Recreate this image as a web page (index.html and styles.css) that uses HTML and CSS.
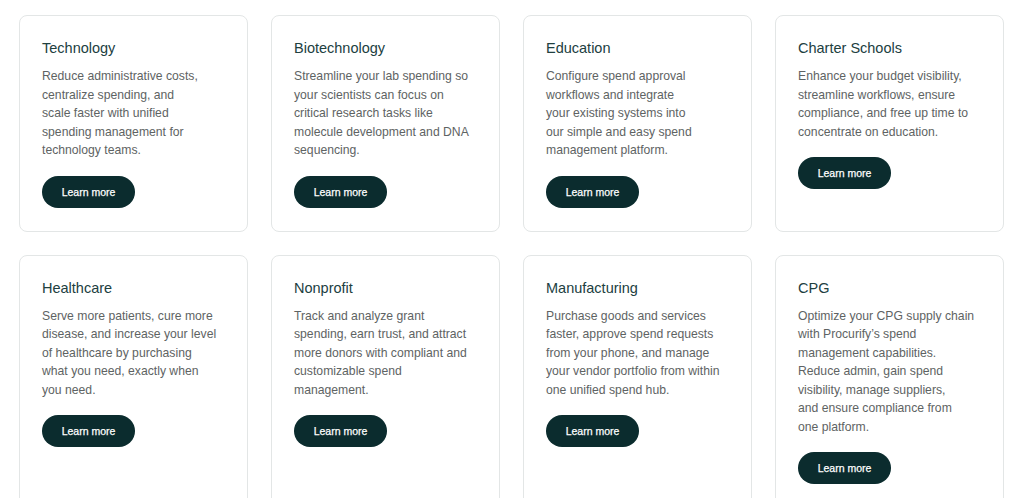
FILE: index.html
```html
<!DOCTYPE html>
<html lang="en">
<head>
<meta charset="utf-8">
<title>Industries</title>
<link rel="stylesheet" href="styles.css">
</head>
<body>
<main class="grid">
  <article class="card">
    <h3 class="card-title">Technology</h3>
    <p class="card-text">Reduce administrative costs,<br>centralize spending, and<br>scale faster with unified<br>spending management for<br>technology teams.</p>
    <a class="btn" href="#">Learn more</a>
  </article>
  <article class="card">
    <h3 class="card-title">Biotechnology</h3>
    <p class="card-text">Streamline your lab spending so<br>your scientists can focus on<br>critical research tasks like<br>molecule development and DNA<br>sequencing.</p>
    <a class="btn" href="#">Learn more</a>
  </article>
  <article class="card">
    <h3 class="card-title">Education</h3>
    <p class="card-text">Configure spend approval<br>workflows and integrate<br>your existing systems into<br>our simple and easy spend<br>management platform.</p>
    <a class="btn" href="#">Learn more</a>
  </article>
  <article class="card">
    <h3 class="card-title">Charter Schools</h3>
    <p class="card-text">Enhance your budget visibility,<br>streamline workflows, ensure<br>compliance, and free up time to<br>concentrate on education.</p>
    <a class="btn" href="#">Learn more</a>
  </article>
  <article class="card">
    <h3 class="card-title">Healthcare</h3>
    <p class="card-text">Serve more patients, cure more<br>disease, and increase your level<br>of healthcare by purchasing<br>what you need, exactly when<br>you need.</p>
    <a class="btn" href="#">Learn more</a>
  </article>
  <article class="card">
    <h3 class="card-title">Nonprofit</h3>
    <p class="card-text">Track and analyze grant<br>spending, earn trust, and attract<br>more donors with compliant and<br>customizable spend<br>management.</p>
    <a class="btn" href="#">Learn more</a>
  </article>
  <article class="card">
    <h3 class="card-title">Manufacturing</h3>
    <p class="card-text">Purchase goods and services<br>faster, approve spend requests<br>from your phone, and manage<br>your vendor portfolio from within<br>one unified spend hub.</p>
    <a class="btn" href="#">Learn more</a>
  </article>
  <article class="card">
    <h3 class="card-title">CPG</h3>
    <p class="card-text">Optimize your CPG supply chain<br>with Procurify’s spend<br>management capabilities.<br>Reduce admin, gain spend<br>visibility, manage suppliers,<br>and ensure compliance from<br>one platform.</p>
    <a class="btn" href="#">Learn more</a>
  </article>
</main>
</body>
</html>
```
FILE: styles.css
```css
* { box-sizing: border-box; }
html, body { margin: 0; padding: 0; background: #ffffff; }
body {
  font-family: "Liberation Sans", Arial, sans-serif;
  overflow: hidden;
}
.grid {
  display: grid;
  grid-template-columns: repeat(4, 229px);
  column-gap: 23px;
  row-gap: 23px;
  padding: 15px 20px 0 19px;
}
.card {
  border: 1px solid #e3e6e6;
  border-radius: 8px;
  padding: 22px 22px 23px 22px;
  display: flex;
  flex-direction: column;
  align-items: flex-start;
  background: #fff;
}
.card-title {
  margin: 0;
  font-size: 14.5px;
  line-height: 20px;
  font-weight: 400;
  color: #21403f;
}
.card-text {
  margin: 9px 0 0;
  font-size: 12.2px;
  line-height: 18.5px;
  color: #5e6363;
}
.btn {
  margin-top: 16px;
  display: inline-flex;
  align-items: center;
  justify-content: center;
  width: 93px;
  height: 32px;
  border-radius: 16px;
  background: #0b2c2e;
  color: #ffffff;
  font-size: 10.5px;
  text-decoration: none;
  -webkit-text-stroke: 0.25px #ffffff;
}
```
